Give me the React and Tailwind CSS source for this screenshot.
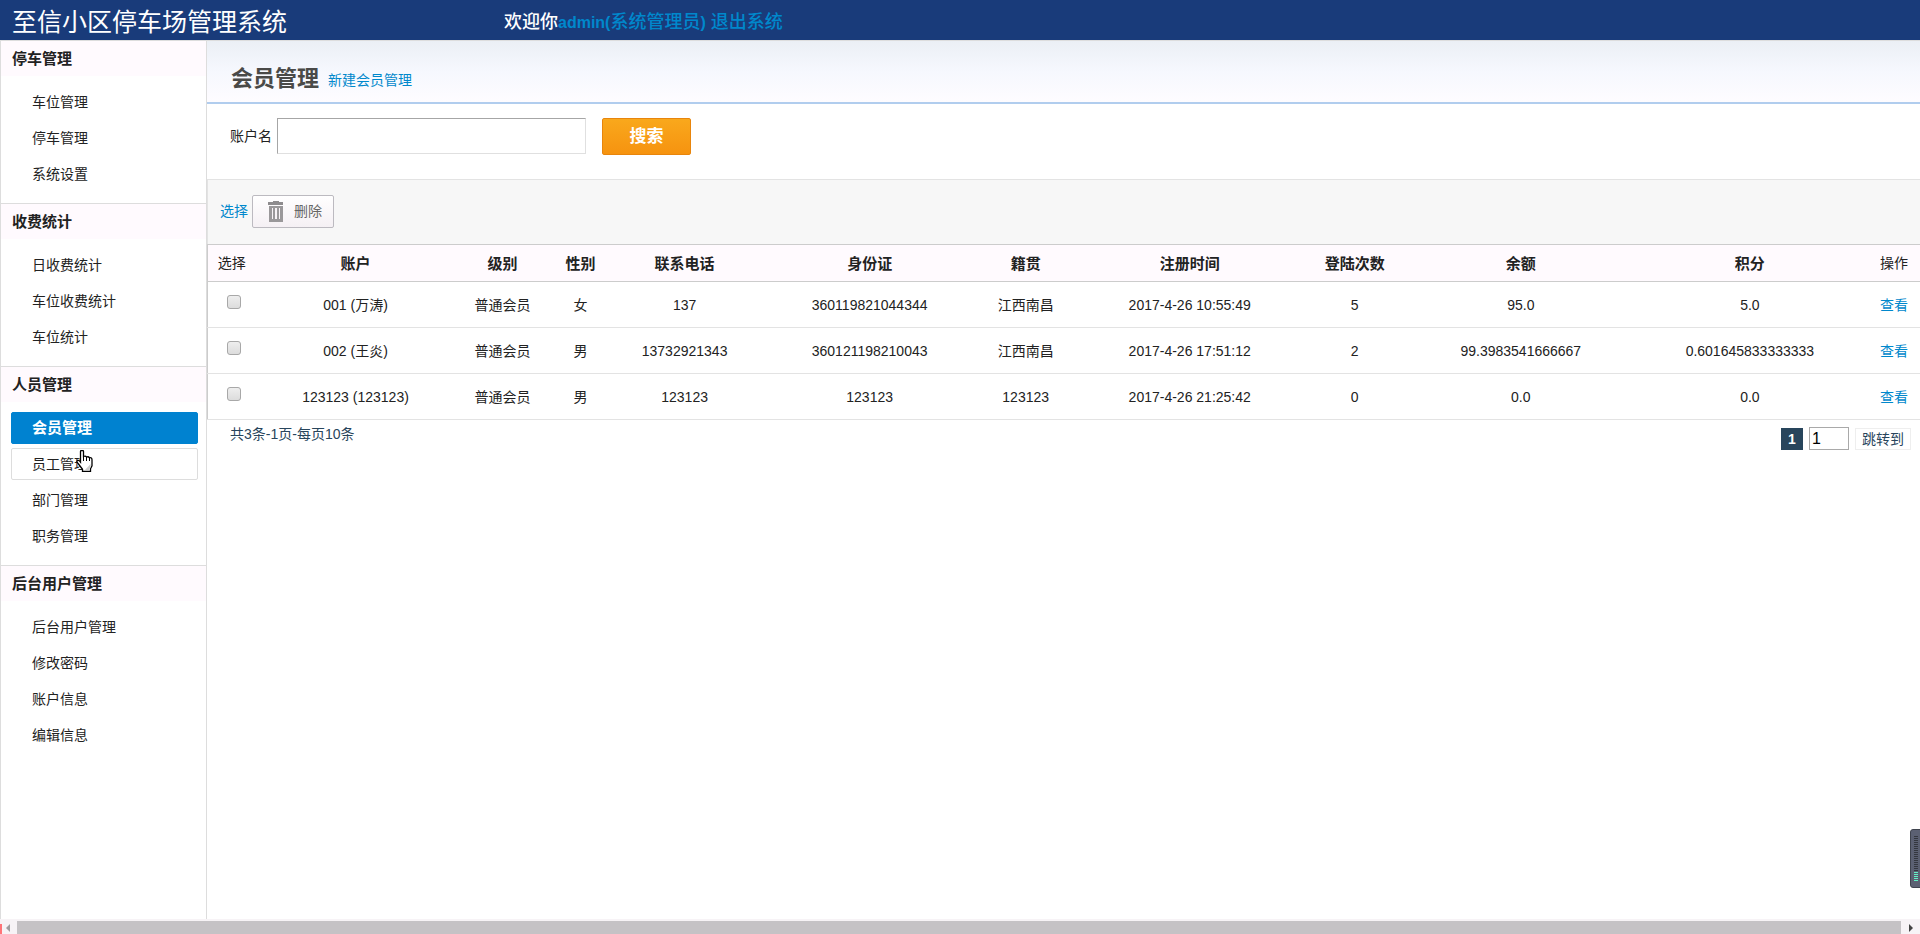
import React from 'react';

const menu = [
  { title: '停车管理', items: ['车位管理', '停车管理', '系统设置'] },
  { title: '收费统计', items: ['日收费统计', '车位收费统计', '车位统计'] },
  { title: '人员管理', items: ['会员管理', '员工管理', '部门管理', '职务管理'] },
  { title: '后台用户管理', items: ['后台用户管理', '修改密码', '账户信息', '编辑信息'] },
];

const columns = ['账户', '级别', '性别', '联系电话', '身份证', '籍贯', '注册时间', '登陆次数', '余额', '积分'];
const widths = [52, 192, 102, 54, 154, 216, 96, 232, 98, 234, 224, 58];
const total = widths.reduce((a, b) => a + b, 0);

const members = [
  ['001 (万涛)', '普通会员', '女', '137', '360119821044344', '江西南昌', '2017-4-26 10:55:49', '5', '95.0', '5.0'],
  ['002 (王炎)', '普通会员', '男', '13732921343', '360121198210043', '江西南昌', '2017-4-26 17:51:12', '2', '99.3983541666667', '0.601645833333333'],
  ['123123 (123123)', '普通会员', '男', '123123', '123123', '123123', '2017-4-26 21:25:42', '0', '0.0', '0.0'],
];

function menuItemClass(name) {
  const base = 'flex h-8 items-center rounded-xs border pl-5 ';
  if (name === '会员管理') return base + 'border-[#0082d0] bg-[#0082d0] text-[15px] font-bold text-white';
  if (name === '员工管理') return base + 'border-[#dddddd] bg-white';
  return base + 'border-transparent';
}

function TrashIcon() {
  return (
    <svg width="16" height="21" viewBox="0 0 16 21" aria-hidden="true">
      <path d="M5 0h6v1h4v3H0V1h5z" fill="#8e8c8e" />
      <path d="M1 5h14v16H1z" fill="#9a989a" />
      <path d="M4 7h1v11H4zM7 7h2v11H7zM11 7h1v11h-1z" fill="#f7f3f6" />
    </svg>
  );
}

function HandCursor() {
  return (
    <svg className="pointer-events-none absolute top-[2px] left-[65px]" width="17" height="22" viewBox="0 0 17 22" aria-hidden="true">
      <path
        d="M4.5 1.5q0-1 1-1h1q1 0 1 1v5q2-1 3 .5q2-.8 3 .8q2.500-.5 2.500 2v6l-1.500 3v2.700H6.500v-2.200l-4-5.300q-2.500-3-1-3.500q1.500-.5 3 1.500z"
        fill="#fff"
        stroke="#000"
        strokeWidth="1.300"
      />
      <path d="M7.500 6v5M10.500 7v4M13.500 8v3" stroke="#000" />
      <path d="M14.500 14v3l-1.500 3H9z" fill="#ccc" />
    </svg>
  );
}

function Sidebar() {
  return (
    <nav className="w-[207px] shrink-0 border-x border-[#dddddd] bg-white">
      {menu.map((group) => (
        <section key={group.title} className="border-b border-[#dddddd] pb-[13px] last:border-b-0">
          <h2 className="flex h-[35px] items-center bg-[#fffafe] pl-[11px] text-[15px] font-bold">{group.title}</h2>
          <ul className="mt-[10px] mr-2 ml-[10px] flex flex-col gap-1">
            {group.items.map((name) => (
              <li key={name} className="relative">
                <a href="#" className={menuItemClass(name)}>{name}</a>
                {name === '员工管理' && <HandCursor />}
              </li>
            ))}
          </ul>
        </section>
      ))}
    </nav>
  );
}

function MemberTable() {
  return (
    <table className="w-full table-fixed border-collapse border-l border-[#cccccc] text-center">
      <colgroup>
        {widths.map((w, i) => (
          <col key={i} style={{ width: (w / total) * 100 + '%' }} />
        ))}
      </colgroup>
      <thead>
        <tr className="h-[37px] border-y border-[#cccccc] bg-[#fffafe]">
          <th className="pr-1 font-normal whitespace-nowrap">选择</th>
          {columns.map((c) => (
            <th key={c} className="pt-[2px] text-[15px] font-bold">{c}</th>
          ))}
          <th className="pr-3 text-right font-normal whitespace-nowrap">操作</th>
        </tr>
      </thead>
      <tbody>
        {members.map((row) => (
          <tr key={row[0]} className="h-[46px] border-b border-[#e3e3e3]">
            <td className="pb-2">
              <input
                type="checkbox"
                aria-label={'选择 ' + row[0]}
                className="size-[14px] appearance-none rounded-[3px] border border-[#a8a8a8] bg-linear-to-b from-[#eeeeee] to-[#dcdcdc] align-middle"
              />
            </td>
            {row.map((cell, i) => (
              <td key={i} className="whitespace-nowrap">{cell}</td>
            ))}
            <td className="pr-3 text-right whitespace-nowrap">
              <a href="#" className="text-[#0088cc]">查看</a>
            </td>
          </tr>
        ))}
      </tbody>
    </table>
  );
}

function Pager() {
  return (
    <div className="flex items-start justify-between pt-[7px] pr-[9px] pl-[23px] text-[#28455c]">
      <span className="leading-[14px]">共3条-1页-每页10条</span>
      <div className="flex items-center">
        <span className="flex size-[22px] items-center justify-center bg-[#28455c] font-bold text-white">1</span>
        <input
          aria-label="页码"
          defaultValue="1"
          className="ml-[6px] h-[23px] w-10 border border-[#a9a9a9] bg-white px-[2px] text-base text-black"
        />
        <button type="button" className="ml-[6px] h-[22px] w-14 border border-[#eeeeee] bg-white leading-5 whitespace-nowrap">
          跳转到
        </button>
      </div>
    </div>
  );
}

function Scrollbar() {
  return (
    <div className="flex h-[15px] shrink-0 items-end bg-[#f7f3f6]">
      <div className="h-[10px] w-[2px] bg-[#ff7478]" />
      <div className="flex h-[13px] w-[15px] items-center justify-center pr-1">
        <svg width="4" height="8" viewBox="0 0 4 8" aria-hidden="true"><path d="M4 0v8L0 4z" fill="#a09ea0" /></svg>
      </div>
      <div className="h-[13px] grow bg-[#c5c2c5]" />
      <div className="flex h-[13px] w-[19px] items-center justify-center">
        <svg width="4" height="8" viewBox="0 0 4 8" aria-hidden="true"><path d="M0 0v8l4-4z" fill="#444" /></svg>
      </div>
    </div>
  );
}

function MeterWidget() {
  return (
    <svg className="fixed right-0 bottom-[46px]" width="10" height="59" viewBox="0 0 10 59" aria-hidden="true">
      <path d="M10 .5H3Q.5.5.5 3v53q0 2.500 2.500 2.500h7" fill="#5b6072" stroke="#3f434e" />
      {Array.from({ length: 23 }, (_, i) => (
        <rect key={i} x="4" y={7 + i * 2} width="4" height="1" fill={i > 17 ? '#62f0c4' : '#34373f'} />
      ))}
    </svg>
  );
}

export default function App() {
  return (
    <div className="flex min-h-screen flex-col bg-white font-['Liberation_Sans','Noto_Sans_CJK_SC',sans-serif] text-sm text-[#222222]">
      <header className="flex h-10 shrink-0 items-center bg-[#193b7a] pt-1 pl-3 text-white">
        <h1 className="w-[492px] text-[25px] leading-10 font-normal">至信小区停车场管理系统</h1>
        <p className="text-lg leading-8 font-medium">
          欢迎你
          <a href="#" className="text-[#0088cc]">
            <span className="text-base font-bold">admin(</span>系统管理员<span className="text-base font-bold">)</span>
          </a>
          {' '}
          <a href="#" className="text-[#0088cc]">退出系统</a>
        </p>
      </header>

      <div className="flex grow border-t border-[#dddddd]">
        <Sidebar />
        <main className="min-w-0 grow">
          <div className="flex h-[63px] items-center border-b-2 border-[#b1cdee] bg-linear-to-b from-[#ebeff5] via-[#f6f8fe] to-[#fefcff] pt-[14px] pl-6">
            <h2 className="text-[22px] font-bold text-[#4a4a48]">会员管理</h2>
            <a href="#" className="ml-[9px] pt-[2px] text-[#0088cc]">新建会员管理</a>
          </div>

          <form className="flex h-[75px] items-start pt-[14px] pl-[23px]" onSubmit={(e) => e.preventDefault()}>
            <label htmlFor="account" className="leading-9">账户名</label>
            <input
              id="account"
              className="ml-[5px] h-9 w-[309px] border border-t-[#a6a6a6] border-r-[#e0e0e0] border-b-[#e0e0e0] border-l-[#a6a6a6] px-2"
            />
            <button
              type="submit"
              className="ml-4 h-[37px] w-[89px] rounded-xs border border-[#e8850c] bg-linear-to-b from-[#f9a81c] to-[#f6930f] pt-[2px] text-[17px] font-bold text-white"
            >
              搜索
            </button>
          </form>

          <div className="flex h-[65px] items-center border-t border-l border-[#e3e3e3] bg-[#f7f7f7] pb-[2px] pl-3">
            <a href="#" className="text-[#0088cc]">选择</a>
            <button
              type="button"
              className="ml-1 flex h-[33px] w-[82px] items-center gap-[10px] rounded-xs border border-[#bcbac0] bg-linear-to-b from-white to-[#f5f0f4] pl-[15px] whitespace-nowrap text-[#666666]"
            >
              <TrashIcon />
              删除
            </button>
          </div>

          <MemberTable />
          <Pager />
        </main>
      </div>

      <Scrollbar />
      <MeterWidget />
    </div>
  );
}
